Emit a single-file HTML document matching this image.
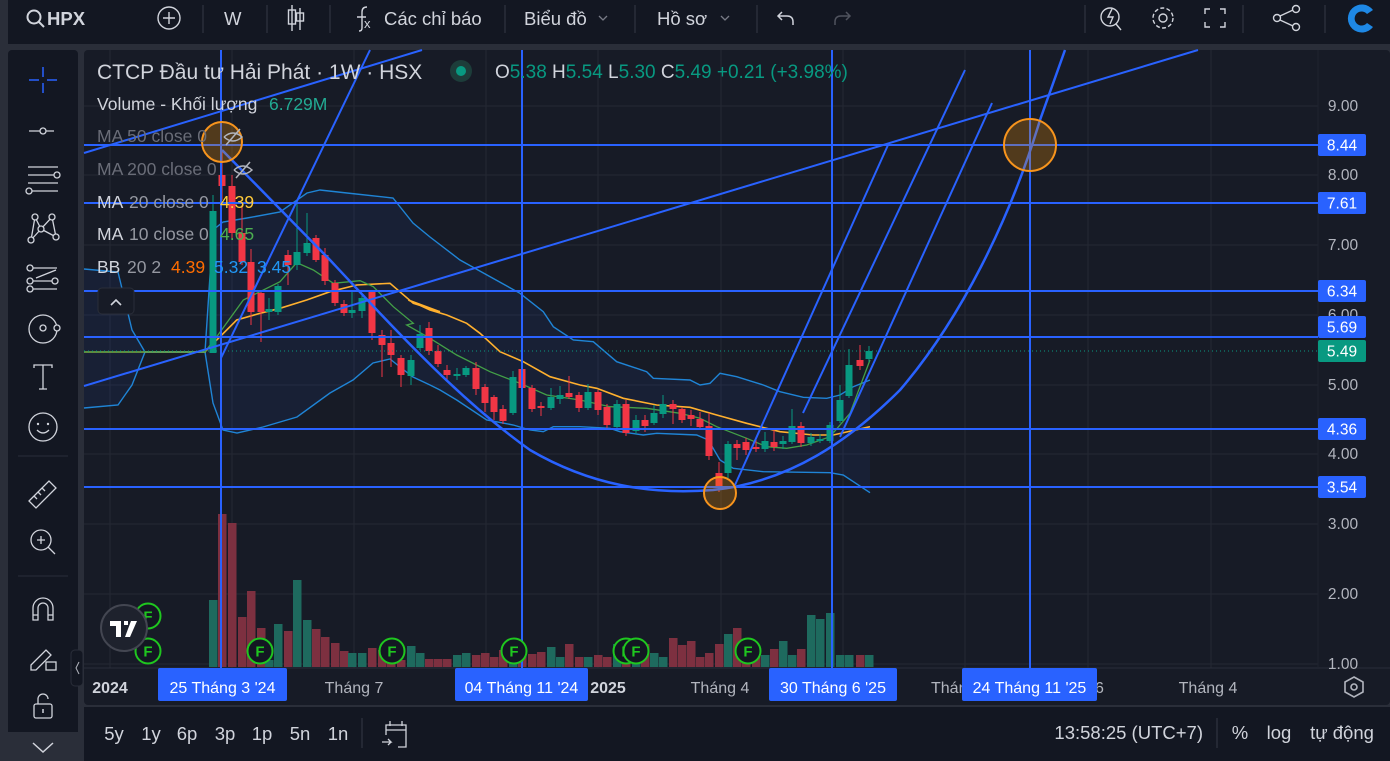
<!DOCTYPE html>
<html><head><meta charset="utf-8"><style>
html,body{margin:0;padding:0;background:#2a2e39;width:1390px;height:761px;overflow:hidden}
svg text{font-family:"Liberation Sans",sans-serif}
</style></head><body>
<svg id="s" width="1390" height="761" viewBox="0 0 1390 761" xmlns="http://www.w3.org/2000/svg">
<rect x="0" y="0" width="1390" height="761" fill="#2a2e39"/>
<rect x="8" y="0" width="1382" height="44" fill="#131722"/>
<rect x="8" y="50" width="70" height="711" rx="4" fill="#131722"/>
<rect x="84" y="50" width="1306" height="655" rx="4" fill="#171b26"/>
<rect x="84" y="707" width="1306" height="54" fill="#131722"/>
<g id="grid" stroke="#242834" stroke-width="1"></g>
<g id="chart"></g>
</svg>
<script>
var NS="http://www.w3.org/2000/svg",S=document.getElementById('s'),G=document.getElementById('chart'),GR=document.getElementById('grid');
function el(t,a,p,txt){var e=document.createElementNS(NS,t);for(var k in a)e.setAttribute(k,a[k]);if(txt!=null)e.textContent=txt;(p||G).appendChild(e);return e;}
[106,175,245,315,385,454,524,594,664].forEach(function(y){el('line',{x1:84,y1:y,x2:1318,y2:y},GR)});
[110,232,354,486,598,721,843,965,1088,1211].forEach(function(x){el('line',{x1:x,y1:50,x2:x,y2:668},GR)});
el('line',{x1:84,y1:668,x2:1390,y2:668,stroke:'#2a2e39'},GR);
el('line',{x1:1318,y1:50,x2:1318,y2:668,stroke:'#1f232e'},GR);
function pts(a,ox,oy,sc){var r=[];for(var i=0;i<a.length;i+=2)r.push((ox+a[i]/sc).toFixed(1)+','+(oy+a[i+1]/sc).toFixed(1));return r;}
var up=[[84,269],[118,272],[132,330],[145,352],[205,352],[213,230],[223,222],[247,218],[280,212],[307,193],[320,190],[347,193],[393,198],[413,223],[430,237],[460,260]].map(function(p){return p.join(',')}).concat(pts([420,40,490,95,520,140,580,180,640,185,710,245,800,275,820,295,930,300,960,315,990,310,1020,280,1070,290,1150,315,1200,335,1270,352,1340,355,1380,345,1420,320,1470,300],380,280,3));
var lo=[[84,408],[118,405],[132,385],[145,352],[205,352],[213,403],[223,430],[237,433],[263,427],[297,417],[330,393],[353,380],[373,363],[390,359],[400,367],[413,377],[430,385],[440,390]].map(function(p){return p.join(',')}).concat(pts([230,360,320,420,400,435,450,450,490,455,520,440,600,440,690,445,720,455,790,465,830,460,950,465,985,480,1020,540,1060,565,1150,575,1350,578,1390,585,1470,638],380,280,3));
el('polygon',{points:up.concat(lo.slice().reverse()).join(' '),fill:'rgba(41,98,255,0.07)'});
el('polyline',{points:up.join(' '),fill:'none',stroke:'#2196f3','stroke-width':1.4,opacity:.85});
el('polyline',{points:lo.join(' '),fill:'none',stroke:'#2196f3','stroke-width':1.4,opacity:.85});
var ma20=['84,352','205,352'].concat(pts([75,605,170,510,240,490,300,475,380,450,450,425,530,405,630,400,700,460,780,485],180,150,3)).concat(pts([85,60,150,90,200,105,260,130,300,160,360,215,430,245,510,290,600,315,650,325,730,355,830,375,930,382,1010,405,1100,430,1200,455,1300,465,1360,465,1470,440],380,280,3));
el('polyline',{points:ma20.join(' '),fill:'none',stroke:'#ffb02e','stroke-width':1.6});
var ma10=['84,352','205,352'].concat(pts([75,605,110,560,190,450,230,430,300,395,350,338,400,360,460,400,540,392,580,410,640,470,700,520],180,150,3)).concat(pts([80,135,150,175,230,225,330,275,420,310,500,345,600,360,690,380,800,385,900,400,960,415,1010,440,1100,475,1160,500,1220,505,1280,495,1350,470,1410,400,1470,240],380,280,3));
el('polyline',{points:ma10.join(' '),fill:'none',stroke:'#43a047','stroke-width':1.3});
var C=[[213,353,211,195,353],[222,175,186,150,200],[232,186,233,175,240],[242,233,262,205,265],[251,262,312,249,325],[261,293,312,290,342],[269,312,309,298,320],[278,312,286,284,315],[288,255,265,250,285],[297,265,252,200,270],[307,253,243,213,256],[316,238,260,235,262],[325,255,281,248,285],[335,283,303,280,306],[344,304,313,300,316],[352,313,310,290,318],[362,311,298,293,318],[372,292,333,290,340],[382,335,345,330,377],[391,343,355,330,367],[401,358,375,355,387],[411,376,360,355,385],[420,348,334,325,350],[429,328,351,322,355],[438,351,364,345,367],[447,370,375,365,381],[457,375,374,368,380],[466,375,368,366,377],[476,368,389,362,395],[485,387,403,384,412],[494,397,412,395,420],[503,409,421,405,424],[513,413,377,371,415],[522,369,388,362,397],[532,388,409,385,412],[541,406,408,402,416],[551,408,397,388,410],[560,399,395,386,404],[569,393,397,376,399],[579,395,408,392,412],[588,408,392,384,410],[598,392,410,390,415],[607,407,425,404,428],[617,427,404,400,430],[626,404,433,400,436],[636,431,420,415,434],[645,420,426,415,432],[654,423,413,405,425],[663,414,404,395,418],[673,404,409,400,424],[682,409,420,407,423],[691,415,419,410,426],[700,419,427,412,430],[709,426,456,413,460],[719,473,487,462,492],[728,473,444,441,478],[737,444,448,440,460],[746,442,450,438,455],[756,447,449,440,452],[765,449,441,432,452],[774,442,447,430,451],[783,444,441,436,449],[792,442,426,409,444],[801,426,443,422,447],[811,443,437,433,446],[820,441,439,434,443],[830,441,425,422,443],[840,421,400,385,423],[849,396,365,349,398],[860,360,366,345,370],[869,359,351,346,362]];
var V=[600,514,523,617,591,628,660,624,631,580,620,629,637,643,651,653,653,648,650,650,660,646,653,659,659,659,655,653,655,653,657,650,655,655,654,652,647,657,644,657,657,655,657,644,648,646,644,653,657,638,645,641,657,653,644,634,628,648,653,655,649,641,655,649,615,619,613,655];
C.forEach(function(c,i){var g=c[2]<c[1];var t=V[i]||655;el('rect',{x:c[0]-4,y:t,width:8.5,height:667-t,fill:g?'#1e6a5e':'#7d3040'});});
C.forEach(function(c){var g=c[2]<c[1];var col=g?'#089981':'#f23645';el('line',{x1:c[0],y1:c[3],x2:c[0],y2:c[4],stroke:col,'stroke-width':1});var t=Math.min(c[1],c[2]),h=Math.max(2,Math.abs(c[1]-c[2]));el('rect',{x:c[0]-3.5,y:t,width:7,height:h,fill:col});});
el('line',{x1:84,y1:351,x2:1318,y2:351,stroke:'#089981','stroke-dasharray':'1,3','stroke-width':1});
var B='#2962ff';
function L(a,b,c,d,w){el('line',{x1:a,y1:b,x2:c,y2:d,stroke:B,'stroke-width':w||2});}
[145,203,291,337,429,487].forEach(function(y){L(84,y,1318,y)});
[221,522,832,1030].forEach(function(x){L(x,50,x,668)});
L(84,386,1198,50);L(84,153,422,50);L(221,358,370,50);
L(735,485,888,145);L(803,413,965,70);L(840,437,992,103);
el('path',{d:'M222,150 L330,260 C400,335 460,400 530,450 C590,485 650,495 713,490 C790,482 850,440 900,390 C960,320 1010,220 1040,120 L1065,50',fill:'none',stroke:B,'stroke-width':2.5});
[[222,142,20],[720,493,16],[1030,145,26]].forEach(function(c){el('circle',{cx:c[0],cy:c[1],r:c[2],fill:'rgba(255,152,0,0.25)',stroke:'#f7941d','stroke-width':2});});
[[148,616],[148,651],[260,651],[392,651],[514,651],[626,651],[636,651],[748,651]].forEach(function(p){el('circle',{cx:p[0],cy:p[1],r:12.5,fill:'#131722',stroke:'#1fc71f','stroke-width':2});el('text',{x:p[0],y:p[1]+5.5,'text-anchor':'middle','font-size':15,'font-weight':'bold',fill:'#1fc71f'},null,'F');});
el('circle',{cx:124,cy:628,r:23,fill:'#1e222d',stroke:'#434651','stroke-width':2});
el('path',{d:'M110,621h11v16h-5v-11h-6z M124,621h4v4h-4z M131,621h6l-7,16h-5z',fill:'#fff'});
[['9.00',106],['8.00',175],['7.00',245],['6.00',315],['5.00',385],['4.00',454],['3.00',524],['2.00',594],['1.00',664]].forEach(function(l){el('text',{x:1343,y:l[1]+5,'text-anchor':'middle','font-size':15.5,fill:'#b2b5be'},null,l[0]);});
[['8.44',145,B],['7.61',203,B],['6.34',291,B],['5.69',327,B],['5.49',351,'#089981'],['4.36',429,B],['3.54',487,B]].forEach(function(l){el('rect',{x:1318,y:l[1]-11,width:48,height:22,rx:2,fill:l[2]});el('text',{x:1342,y:l[1]+5.5,'text-anchor':'middle','font-size':15.5,fill:'#fff'},null,l[0]);});
[['2024',110,'#d1d4dc','bold'],['Tháng 7',354,'#b2b5be','normal'],['2025',608,'#d1d4dc','bold'],['Tháng 4',720,'#b2b5be','normal'],['Tháng 4',1208,'#b2b5be','normal']].forEach(function(l){el('text',{x:l[1],y:693,'text-anchor':'middle','font-size':16,fill:l[2],'font-weight':l[3]},null,l[0]);});
el('text',{x:931,y:693,'font-size':16,fill:'#b2b5be'},null,'Thán');el('text',{x:1095,y:693,'font-size':16,fill:'#b2b5be'},null,'6');
[['25 Tháng 3 \'24',158,287],['04 Tháng 11 \'24',455,588],['30 Tháng 6 \'25',769,897],['24 Tháng 11 \'25',962,1097]].forEach(function(l){el('rect',{x:l[1],y:668,width:l[2]-l[1],height:33,rx:2,fill:B});el('text',{x:(l[1]+l[2])/2,y:693,'text-anchor':'middle','font-size':16,fill:'#fff'},null,l[0]);});
el('path',{d:'M1354,677 l9,5 v10 l-9,5 l-9,-5 v-10z',fill:'none',stroke:'#b2b5be','stroke-width':1.6});el('circle',{cx:1354,cy:687,r:3,fill:'none',stroke:'#b2b5be','stroke-width':1.6});
el('rect',{x:71,y:650,width:12,height:36,rx:4,fill:'#131722',stroke:'#2a2e39'});el('path',{d:'M79,662 l-3,6 l3,6',fill:'none',stroke:'#b2b5be'});
var T=function(x,y,s,c,t,fs){return el('text',{x:x,y:y,'font-size':fs||17.5,fill:c},null,t);};
T(97,79,0,'#d1d4dc','CTCP Đầu tư Hải Phát · 1W · HSX',21);
el('circle',{cx:461,cy:71,r:11,fill:'#1d3d3a'});el('circle',{cx:461,cy:71,r:5,fill:'#089981'});
var tx=el('text',{x:495,y:78,'font-size':19,fill:'#d1d4dc'});
[['O','#d1d4dc'],['5.38 ','#089981'],['H','#d1d4dc'],['5.54 ','#089981'],['L','#d1d4dc'],['5.30 ','#089981'],['C','#d1d4dc'],['5.49 +0.21 (+3.98%)','#089981']].forEach(function(s){el('tspan',{fill:s[1]},tx,s[0]);});
tx.setAttribute('xml:space','preserve');
T(97,110,0,'#d1d4dc','Volume - Khối lượng');T(269,110,0,'#22ab94','6.729M');
T(97,142,0,'#6a6d78','MA 50 close 0');T(97,175,0,'#6a6d78','MA 200 close 0');
T(97,208,0,'#d1d4dc','MA');T(129,208,0,'#9598a1','20 close 0');T(220,208,0,'#ffca3a','4.39');
T(97,240,0,'#d1d4dc','MA');T(129,240,0,'#9598a1','10 close 0');T(220,240,0,'#4caf50','4.65');
T(97,273,0,'#d1d4dc','BB');T(127,273,0,'#9598a1','20 2');T(171,273,0,'#ff6d00','4.39');T(214,273,0,'#2196f3','5.32');T(257,273,0,'#2196f3','3.45');
[[233,137],[243,170]].forEach(function(p){el('path',{d:'M'+(p[0]-9)+','+p[1]+' q9,-8 18,0 q-9,8 -18,0 M'+(p[0]-7)+','+(p[1]+8)+' l14,-16',fill:'none',stroke:'#b2b5be','stroke-width':1.5});});
el('rect',{x:98,y:288,width:36,height:26,rx:4,fill:'#171b26',stroke:'#2a2e39'});el('path',{d:'M111,305 l5,-5 l5,5',fill:'none',stroke:'#d1d4dc','stroke-width':1.6});
var W='#d1d4dc';
el('circle',{cx:34,cy:17,r:6.5,fill:'none',stroke:W,'stroke-width':2});el('line',{x1:39,y1:22,x2:44,y2:27,stroke:W,'stroke-width':2});
T(47,25,0,W,'HPX',18.5).setAttribute('font-weight','bold');
el('circle',{cx:169,cy:18,r:11,fill:'none',stroke:W,'stroke-width':1.4});el('path',{d:'M169,12v12M163,18h12',stroke:W,'stroke-width':1.4});
[203,267,330,505,635,757,1085,1243,1325].forEach(function(x){el('line',{x1:x,y1:5,x2:x,y2:33,stroke:'#363a45'});});
T(224,25,0,W,'W',18.5);
el('path',{d:'M292,5v26M300,8v22',stroke:W,'stroke-width':1.4});el('rect',{x:288.5,y:10,width:7,height:14,fill:'none',stroke:W,'stroke-width':1.4});el('rect',{x:296.5,y:13,width:7,height:8,fill:'none',stroke:W,'stroke-width':1.4});
el('path',{d:'M362,28 q0,3 -3,3 M362,28 v-16 q0,-5 5,-5 M357,17h9',fill:'none',stroke:W,'stroke-width':1.4});T(364,28,0,W,'x',13);
T(384,25,0,W,'Các chỉ báo',18.5);T(524,25,0,W,'Biểu đồ',18.5);T(657,25,0,W,'Hồ sơ',18.5);
el('path',{d:'M599,16l4,4l4,-4M721,16l4,4l4,-4',fill:'none',stroke:'#787b86','stroke-width':1.3});
el('path',{d:'M782,12l-4,4l4,4M778,16h9q6,0 6,6v3',fill:'none',stroke:W,'stroke-width':1.5});
el('path',{d:'M846,12l4,4l-4,4M850,16h-9q-6,0 -6,6v3',fill:'none',stroke:'#50535e','stroke-width':1.5});
el('circle',{cx:1110,cy:17,r:9,fill:'none',stroke:W,'stroke-width':1.4});el('path',{d:'M1116,24l5,6M1112,9l-4,8h5l-3,7',fill:'none',stroke:W,'stroke-width':1.4});
el('circle',{cx:1163,cy:18,r:4,fill:'none',stroke:W,'stroke-width':1.4});el('circle',{cx:1163,cy:18,r:10,fill:'none',stroke:W,'stroke-width':1.4,'stroke-dasharray':'4,2.3'});
el('path',{d:'M1205,14v-5h5M1220,9h5v5M1225,22v5h-5M1210,27h-5v-5',fill:'none',stroke:W,'stroke-width':1.4});
el('circle',{cx:1296,cy:9,r:3.5,fill:'none',stroke:W,'stroke-width':1.4});el('circle',{cx:1277,cy:18,r:3.5,fill:'none',stroke:W,'stroke-width':1.4});el('circle',{cx:1296,cy:27,r:3.5,fill:'none',stroke:W,'stroke-width':1.4});el('path',{d:'M1280,16l13,-6M1280,20l13,6',stroke:W,'stroke-width':1.4});
el('path',{d:'M1373,10 a14,14 0 1 0 0,17 l-6,-4 a7,7 0 1 1 0,-9z',fill:'#1e88e5'});
var I='#d1d4dc';
el('path',{d:'M43,67v10M43,83v10M29,80h10M47,80h10',stroke:'#2962ff','stroke-width':1.5});
el('path',{d:'M29,131h25',stroke:I,'stroke-width':1.3});el('circle',{cx:43,cy:131,r:3,fill:'#131722',stroke:I,'stroke-width':1.3});
el('path',{d:'M28,167h30M28,175h26M28,183h30M32,191h26',stroke:I,'stroke-width':1.3});el('circle',{cx:57,cy:175,r:3,fill:'#131722',stroke:I,'stroke-width':1.3});el('circle',{cx:29,cy:191,r:3,fill:'#131722',stroke:I,'stroke-width':1.3});
el('path',{d:'M35,217l-4,23M35,217l6,12l11,-12l4,20M41,229l-10,11M41,229l15,8',fill:'none',stroke:I,'stroke-width':1.3});[[35,217],[52,217],[41,229],[31,240],[56,237]].forEach(function(p){el('circle',{cx:p[0],cy:p[1],r:3,fill:'#131722',stroke:I,'stroke-width':1.3});});
el('path',{d:'M30,268h27M30,281h25M30,289h27M36,278l20,-8',fill:'none',stroke:I,'stroke-width':1.3});[[30,268],[30,281],[55,281],[30,289]].forEach(function(p){el('circle',{cx:p[0],cy:p[1],r:3,fill:'#131722',stroke:I,'stroke-width':1.3});});
el('circle',{cx:43,cy:329,r:14,fill:'none',stroke:I,'stroke-width':1.3});el('circle',{cx:43,cy:328,r:3,fill:'none',stroke:I,'stroke-width':1.3});el('circle',{cx:57,cy:328,r:3,fill:'#131722',stroke:I,'stroke-width':1.3});
el('path',{d:'M34,368v-3h18v3M43,365v24M39,389h8',fill:'none',stroke:I,'stroke-width':1.3});
el('circle',{cx:43,cy:427,r:14,fill:'none',stroke:I,'stroke-width':1.3});el('path',{d:'M37,430q6,6 12,0',fill:'none',stroke:I,'stroke-width':1.3});el('circle',{cx:38,cy:424,r:1.2,fill:I});el('circle',{cx:48,cy:424,r:1.2,fill:I});
el('line',{x1:18,y1:456,x2:68,y2:456,stroke:'#2a2e39'});
el('path',{d:'M29,501l20,-20l7,7l-20,20z M34,496l3,3M38,492l3,3M42,488l3,3',fill:'none',stroke:I,'stroke-width':1.3});
el('circle',{cx:41,cy:540,r:10,fill:'none',stroke:I,'stroke-width':1.3});el('path',{d:'M48,547l7,7M37,540h8M41,536v8',stroke:I,'stroke-width':1.3});
el('line',{x1:18,y1:576,x2:68,y2:576,stroke:'#2a2e39'});
el('path',{d:'M33,620v-12a10,10 0 0 1 20,0v12h-5v-12a5,5 0 0 0 -10,0v12z M33,615h5M48,615h5',fill:'none',stroke:I,'stroke-width':1.3});
el('path',{d:'M31,665l15,-15l5,5l-15,15h-5z',fill:'none',stroke:I,'stroke-width':1.3});el('rect',{x:46,y:662,width:10,height:8,fill:'none',stroke:I,'stroke-width':1.3});
el('rect',{x:34,y:704,width:18,height:14,rx:2,fill:'none',stroke:I,'stroke-width':1.3});el('path',{d:'M38,704v-5a5,5 0 0 1 10,0',fill:'none',stroke:I,'stroke-width':1.3});el('line',{x1:43,y1:709,x2:43,y2:713,stroke:I,'stroke-width':1.5});
el('rect',{x:8,y:732,width:70,height:29,fill:'#2a2e39'});el('path',{d:'M33,743l10,9l10,-9',fill:'none',stroke:I,'stroke-width':1.5});
[['5y',114],['1y',151],['6p',187],['3p',225],['1p',262],['5n',300],['1n',338]].forEach(function(l){el('text',{x:l[1],y:740,'text-anchor':'middle','font-size':18.5,fill:W},null,l[0]);});
el('line',{x1:362,y1:718,x2:362,y2:748,stroke:'#363a45'});el('line',{x1:1217,y1:718,x2:1217,y2:748,stroke:'#363a45'});
el('path',{d:'M386,735v-10h20v22h-8M386,730h20M390,721v5M402,721v5M382,742h9l-3,-3M391,742l-3,3',fill:'none',stroke:I,'stroke-width':1.3});
el('text',{x:1203,y:739,'text-anchor':'end','font-size':18.5,fill:W},null,'13:58:25 (UTC+7)');
el('text',{x:1240,y:739,'text-anchor':'middle','font-size':18.5,fill:W},null,'%');
el('text',{x:1279,y:739,'text-anchor':'middle','font-size':18.5,fill:W},null,'log');
el('text',{x:1342,y:739,'text-anchor':'middle','font-size':18.5,fill:W},null,'tự động');
</script>
</body></html>
